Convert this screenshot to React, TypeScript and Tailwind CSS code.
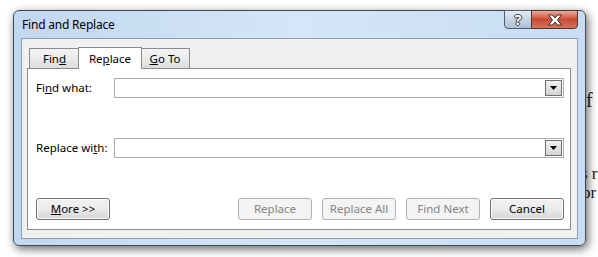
import React from "react";

const font = { fontFamily: '"Noto Sans", "Segoe UI", Arial, sans-serif' };
const serif = { fontFamily: '"Liberation Serif", serif' };

const Btn = ({
  children,
  disabled,
}: {
  children: React.ReactNode;
  disabled?: boolean;
}) => (
  <div
    className={`w-[74px] h-[22px] rounded-[3px] border flex items-center justify-center text-[11.5px] ${
      disabled
        ? "border-[#adb2b5] bg-[#f4f4f4] text-[#838383]"
        : "border-[#707070] bg-gradient-to-b from-[#f2f2f2] via-[#ebebeb] to-[#d6d6d6] text-black shadow-[inset_0_0_0_1px_#fcfcfc]"
    }`}
  >
    {children}
  </div>
);

const Combo = () => (
  <div className="flex-1 h-[20px] border border-[#abadb3] bg-white flex justify-end items-stretch p-px">
    <div className="w-[17px] border border-[#707070] bg-gradient-to-b from-[#f2f2f2] to-[#d4d4d4] flex items-center justify-center">
      <svg width="7" height="4" viewBox="0 0 7 4">
        <path d="M0 0h7L3.5 4z" fill="#000" />
      </svg>
    </div>
  </div>
);

export default function App() {
  return (
    <div className="relative w-[598px] h-[257px] bg-white overflow-hidden" style={font}>
      {/* document text peeking out behind the dialog */}
      <div className="absolute left-[586px] top-[90px] text-[20px] leading-none text-[#222]" style={serif}>
        f
      </div>
      <div className="absolute left-[581px] top-[165px] text-[17px] leading-none text-[#222] whitespace-nowrap" style={serif}>
        s r
      </div>
      <div className="absolute left-[582px] top-[184px] text-[17px] leading-none text-[#222] whitespace-nowrap" style={serif}>
        or
      </div>

      {/* window */}
      <div className="absolute left-[13px] top-[10px] w-[573px] h-[236px] rounded-[6px] border border-[#3f4a57] bg-gradient-to-r from-[#c2d8f0] via-[#d4e6f8] to-[#c8ddf3] shadow-[2px_3px_10px_rgba(0,0,0,0.6)] flex flex-col px-[7px] pb-[6px]">
        {/* title bar */}
        <div className="relative h-[27px] flex items-center pl-px text-[12px] text-black">
          <span className="tracking-[-0.2px]">Find and Replace</span>
          <div className="absolute right-0 top-[-1px] flex h-[19px]">
            <div className="w-[28px] rounded-bl-[4px] border border-[#4f5d6d] bg-gradient-to-b from-[#e4ecf5] via-[#c7d4e3] to-[#aebfd3] flex items-center justify-center">
              <span
                className="text-white font-bold text-[14px] leading-none"
                style={{
                  textShadow:
                    "0 0 1px #333, 1px 0 0 #445, -1px 0 0 #445, 0 1px 0 #445, 0 -1px 0 #445",
                }}
              >
                ?
              </span>
            </div>
            <div className="w-[47px] -ml-px rounded-br-[4px] border border-[#4f3530] bg-gradient-to-b from-[#e9a99b] via-[#c94a35] to-[#d8735d] flex items-center justify-center">
              <svg width="16" height="12" viewBox="0 0 16 12">
                <path
                  d="M1.5 1h4L8 4l2.5-3h4L10.5 6l4 5h-4L8 8l-2.5 3h-4l4-5z"
                  fill="#fff"
                  stroke="#3a2a2a"
                  strokeWidth="1"
                  strokeLinejoin="round"
                />
              </svg>
            </div>
          </div>
        </div>

        {/* client area */}
        <div className="flex-1 border border-[#8e9fb3] bg-[#f0f0f0] flex flex-col pt-[8px] pl-[5px] pr-[6px] pb-[8px]">
          <div className="flex items-end pl-[2px] h-[21px] text-[11.5px]">
            <div className="w-[50px] h-[20px] border border-r-0 border-b-0 border-[#898c95] bg-gradient-to-b from-[#f3f3f3] via-[#ebebeb] to-[#dcdcdc] flex items-center justify-center">
              <span>
                Fin<u>d</u>
              </span>
            </div>
            <div className="relative z-10 w-[64px] -mx-px h-[22px] -mb-px border border-b-0 border-[#898c95] bg-white flex items-center justify-center">
              <span>
                Re<u>p</u>lace
              </span>
            </div>
            <div className="w-[49px] h-[20px] border border-l-0 border-b-0 border-[#898c95] bg-gradient-to-b from-[#f3f3f3] via-[#ebebeb] to-[#dcdcdc] flex items-center justify-center">
              <span>
                <u>G</u>o To
              </span>
            </div>
          </div>
          <div className="flex-1 border border-[#898c95] bg-white flex flex-col pt-[9px] pl-[8px] pr-[6px] text-[11.5px]">
            <div className="flex items-center h-[20px]">
              <span className="w-[78px]">
                Fi<u>n</u>d what:
              </span>
              <Combo />
            </div>
            <div className="flex items-center h-[20px] mt-[40px]">
              <span className="w-[78px]">
                Replace wi<u>t</u>h:
              </span>
              <Combo />
            </div>
            <div className="flex items-center mt-[40px]">
              <Btn>
                <span>
                  <u>M</u>ore &gt;&gt;
                </span>
              </Btn>
              <div className="flex-1" />
              <div className="flex gap-[10px]">
                <Btn disabled>Replace</Btn>
                <Btn disabled>Replace All</Btn>
                <Btn disabled>Find Next</Btn>
                <Btn>Cancel</Btn>
              </div>
            </div>
          </div>
        </div>
      </div>
    </div>
  );
}
